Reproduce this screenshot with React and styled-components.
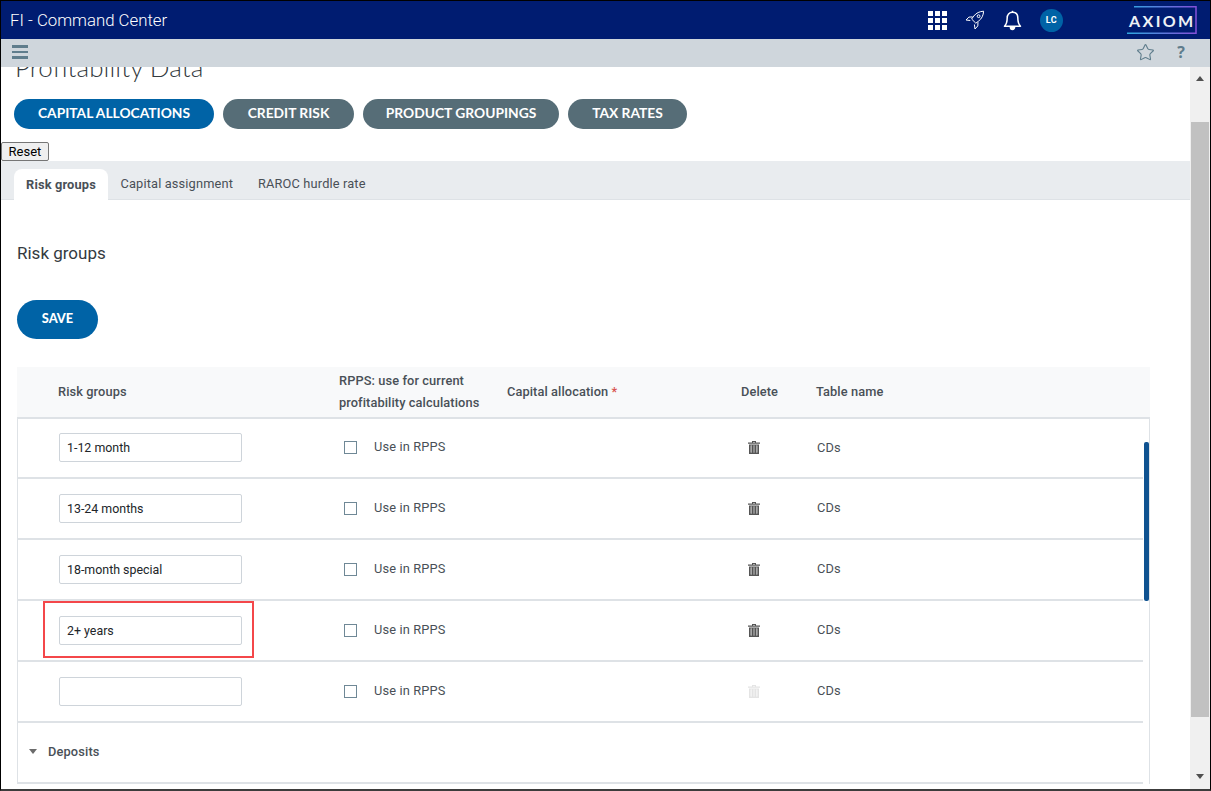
import React from "react"
import styled, { createGlobalStyle } from "styled-components"
import { Star } from "lucide-react"

const rows = [
    { name: "1-12 month" },
    { name: "13-24 months" },
    { name: "18-month special" },
    { name: "2+ years", marked: true },
    { name: "", disabled: true },
]

const tabs = ["Capital assignment", "RAROC hurdle rate"]

const App = () => {
    return (
        <Frame>
            <GlobalStyle />

            <TopBar>
                <AppName>FI - Command Center</AppName>
                <Waffle>
                    {Array.from({ length: 9 }).map((_, i) => <i key={i} />)}
                </Waffle>
                <RocketIcon />
                <BellIcon />
                <Avatar>LC</Avatar>
                <Logo>
                    <LogoBracket />
                    AXIOM
                </Logo>
            </TopBar>

            <ToolBar>
                <Burger><i /><i /><i /></Burger>
                <ToolRight>
                    <Star size={19} strokeWidth={1.4} color="#5f7d8c" />
                    <Question>?</Question>
                </ToolRight>
            </ToolBar>

            <Body>
                <Main>
                    <Title>Profitability Data</Title>

                    <Pills>
                        <Pill $active $width={200}>CAPITAL ALLOCATIONS</Pill>
                        <Pill $width={131}>CREDIT RISK</Pill>
                        <Pill $width={196}>PRODUCT GROUPINGS</Pill>
                        <Pill $width={119}>TAX RATES</Pill>
                    </Pills>

                    <ResetButton>Reset</ResetButton>

                    <TabBar>
                        <ActiveTab>Risk groups</ActiveTab>
                        {tabs.map((t) => <Tab key={t}>{t}</Tab>)}
                    </TabBar>

                    <Heading>Risk groups</Heading>
                    <SaveButton>SAVE</SaveButton>

                    <Table>
                        <HeaderRow>
                            <span>Risk groups</span>
                            <HeaderTwoLine>RPPS: use for current<br />profitability calculations</HeaderTwoLine>
                            <span>Capital allocation <Required>*</Required></span>
                            <span>Delete</span>
                            <span>Table name</span>
                        </HeaderRow>

                        <TableBody>
                            {rows.map((row, i) => (
                                <Row key={i}>
                                    <InputCell>
                                        <NameInput defaultValue={row.name} />
                                        {row.marked ? <RedBox /> : null}
                                    </InputCell>
                                    <CheckCell>
                                        <Check />
                                        <CheckLabel>Use in RPPS</CheckLabel>
                                    </CheckCell>
                                    <span />
                                    <TrashCell><TrashIcon $disabled={row.disabled} /></TrashCell>
                                    <NameCell>CDs</NameCell>
                                </Row>
                            ))}
                            <GroupRow>
                                <Caret />
                                Deposits
                            </GroupRow>
                            <InnerThumb />
                        </TableBody>
                    </Table>
                </Main>

                <ScrollBar>
                    <ArrowUp />
                    <Thumb />
                    <ArrowDown />
                </ScrollBar>
            </Body>
        </Frame>
    )
}

export default App

// Icons
const RocketIcon = () => (
    <RocketSvg viewBox="0 0 20 20" fill="none" stroke="#fff" strokeWidth="1" strokeLinejoin="round">
        <path d="M18.6 1.2c-4 .2-7.4 1.8-9.8 4.8L6.6 9l4.2 4.2 3-2.3c3-2.3 4.6-5.7 4.8-9.7z" />
        <path d="M7.6 6.9 3.9 7.1 1 10l4.3.5" />
        <path d="M13 12.2l-.2 3.7L10 19l-.6-4.5" />
        <circle cx="13.6" cy="6.2" r="1.4" />
    </RocketSvg>
)

const BellIcon = () => (
    <BellSvg viewBox="0 0 20 22" fill="none" stroke="#fff" strokeWidth="1.6" strokeLinejoin="round">
        <path d="M10 2.4c-3.6 0-5.6 2.6-5.6 6 0 4.8-1 6.800-2.800 8.600h16.800c-1.800-1.800-2.800-3.800-2.800-8.600 0-3.400-2-6-5.600-6z" />
        <path d="M10 .8v1.600" />
        <path d="M7.800 18.200a2.200 2.200 0 0 0 4.400 0z" fill="#fff" />
    </BellSvg>
)

const TrashIcon = ({ $disabled }) => (
    <TrashSvg viewBox="0 0 12 13" $disabled={$disabled}>
        <path d="M4 0h4v1.500h4v1.300H0V1.500h4zM5 1v.5h2V1z" fillRule="evenodd" />
        <path d="M1 3.400h10V13H1zM2.600 4.600v6.900h1.300V4.600zM5.400 4.600v6.900h1.200V4.600zM8.100 4.600v6.900h1.300V4.600z" fillRule="evenodd" />
        <path d="M2.600 4.600h6.800v6.900H2.600z" opacity="0.45" />
    </TrashSvg>
)

const LogoBracket = () => (
    <BracketSvg viewBox="0 0 70 28" fill="none">
        <defs>
            <linearGradient id="axiomEdge" x1="0" x2="1" y1="0" y2="0">
                <stop offset="0" stopColor="#2fa8e0" />
                <stop offset="1" stopColor="#8450d8" />
            </linearGradient>
        </defs>
        <path d="M7 .75h62v26.500H0" stroke="url(#axiomEdge)" strokeWidth="1.500" />
    </BracketSvg>
)

// Style
const GlobalStyle = createGlobalStyle`
    html, body {
        margin: 0;
        padding: 0;
        background: #fff;
    }

    * {
        box-sizing: border-box;
    }
`

const Frame = styled.div`
    width: 1211px;
    height: 791px;
    display: flex;
    flex-direction: column;
    overflow: hidden;
    border: 1px solid #000;
    border-bottom: 2px solid #3c3c3c;
    font-family: Roboto, "Liberation Sans", sans-serif;
    color: #343a40;
    background: #fff;
`

const TopBar = styled.div`
    height: 38px;
    flex: none;
    display: flex;
    align-items: center;
    background: #001c71;
    color: #fff;
    padding-left: 9px;
`

const AppName = styled.div`
    font-size: 16.800px;
    font-weight: 300;
    width: 918px;
`

const Waffle = styled.div`
    width: 19px;
    height: 19px;
    display: grid;
    grid-template-columns: repeat(3, 5px);
    grid-template-rows: repeat(3, 5px);
    gap: 2px;

    & > i {
        background: #fff;
    }
`

const RocketSvg = styled.svg`
    width: 20px;
    height: 20px;
    margin-left: 18px;
`

const BellSvg = styled.svg`
    width: 19px;
    height: 21px;
    margin-left: 18px;
`

const Avatar = styled.div`
    width: 23px;
    height: 23px;
    margin-left: 18px;
    border-radius: 50%;
    background: #0063a6;
    display: flex;
    align-items: center;
    justify-content: center;
    font-size: 9px;
    font-weight: 700;
    letter-spacing: 0.5px;
`

const Logo = styled.div`
    position: relative;
    width: 70px;
    height: 28px;
    margin-left: 64px;
    display: flex;
    align-items: center;
    padding-left: 2px;
    font-family: Lato, sans-serif;
    font-size: 16px;
    font-weight: 700;
    letter-spacing: 2.400px;
    color: #eef2f6;
`

const BracketSvg = styled.svg`
    position: absolute;
    inset: 0;
    width: 70px;
    height: 28px;
`

const ToolBar = styled.div`
    height: 28px;
    flex: none;
    display: flex;
    align-items: center;
    justify-content: space-between;
    background: #cfd6dc;
    padding: 0 25px 2px 11px;
    position: relative;
    z-index: 1;
`

const Burger = styled.div`
    width: 16px;
    display: flex;
    flex-direction: column;
    gap: 3px;

    & > i {
        height: 2.500px;
        background: #5f7d8c;
    }
`

const ToolRight = styled.div`
    display: flex;
    align-items: center;
    gap: 22px;
`

const Question = styled.span`
    font-family: "Open Sans", sans-serif;
    font-size: 16px;
    font-weight: 700;
    color: #5f7d8c;
`

const Body = styled.div`
    flex: 1;
    min-height: 0;
    display: flex;
`

const Main = styled.div`
    flex: 1;
    min-width: 0;
    overflow: hidden;
`

const Title = styled.h1`
    margin: -24px 0 8px 14px;
    height: 48px;
    line-height: 48px;
    font-family: Lato, sans-serif;
    font-size: 26px;
    font-weight: 300;
    letter-spacing: 0.08px;
    color: #343a40;
`

const Pills = styled.div`
    display: flex;
    gap: 9px;
    padding-left: 13px;
`

const Pill = styled.div`
    width: ${(props) => props.$width}px;
    height: 30px;
    padding-bottom: 3px;
    border-radius: 15px;
    display: flex;
    align-items: center;
    justify-content: center;
    background: ${(props) => (props.$active ? "#0063a6" : "#566d77")};
    color: #fff;
    font-family: Lato, sans-serif;
    font-size: 13.800px;
    font-weight: 700;
`

const ResetButton = styled.button`
    display: block;
    margin: 13px 0 0;
    width: 48px;
    height: 19px;
    padding: 0;
    border: 1px solid #767676;
    border-radius: 2px;
    background: #efefef;
    color: #000;
    font-family: Roboto, sans-serif;
    font-size: 13px;
`

const TabBar = styled.div`
    height: 39px;
    display: flex;
    align-items: flex-end;
    background: #e9ecef;
    border-bottom: 1px solid #dee2e6;
    padding-left: 13px;
`

const Tab = styled.div`
    height: 31px;
    padding: 0 12.500px;
    display: flex;
    align-items: center;
    font-size: 12.800px;
    letter-spacing: 0.15px;
    color: #495057;
`

const ActiveTab = styled(Tab)`
    width: 94px;
    margin-bottom: -1px;
    justify-content: center;
    padding: 0;
    background: #fff;
    border-radius: 8px 8px 0 0;
    font-weight: 700;
`

const Heading = styled.div`
    margin: 43px 0 0 16px;
    height: 20px;
    line-height: 20px;
    font-size: 17px;
    color: #343a40;
`

const SaveButton = styled.button`
    display: block;
    margin: 37px 0 0 16px;
    width: 81px;
    height: 39px;
    padding: 0 0 3px;
    border: 0;
    border-radius: 20px;
    background: #0063a6;
    color: #fff;
    font-family: Lato, sans-serif;
    font-size: 12.800px;
    font-weight: 900;
`

const Table = styled.div`
    margin: 28px 0 0 16px;
    width: 1133px;
`

const columns = "281px 168px 234px 75px 1fr"

const HeaderRow = styled.div`
    height: 52px;
    display: grid;
    grid-template-columns: ${columns};
    align-items: center;
    padding-left: 41px;
    background: #f8f9fa;
    border-bottom: 2px solid #dee2e6;
    font-size: 12.800px;
    font-weight: 500;
    letter-spacing: 0.1px;
    color: #495057;

    & > span {
        margin-bottom: 2px;
    }
`

const HeaderTwoLine = styled.div`
    line-height: 22px;
    white-space: nowrap;
`

const Required = styled.span`
    color: #d9534f;
`

const TableBody = styled.div`
    position: relative;
    border-left: 1px solid #dee2e6;
    border-right: 1px solid #dee2e6;
    padding-right: 6px;
`

const InnerThumb = styled.div`
    position: absolute;
    right: 0;
    top: 23px;
    width: 5px;
    height: 159px;
    border-radius: 2px;
    background: #0f5290;
`

const Row = styled.div`
    height: 61px;
    display: grid;
    grid-template-columns: ${columns};
    align-items: center;
    padding: 0 0 1px 41px;
    border-bottom: 2px solid #dee2e6;
    font-size: 12.800px;
    color: #495057;

    &:first-of-type {
        height: 60px;
    }
`

const InputCell = styled.div`
    position: relative;
    height: 29px;
`

const NameInput = styled.input`
    display: block;
    width: 183px;
    height: 29px;
    padding: 0 7px;
    border: 1px solid #ced4da;
    border-radius: 2px;
    font-family: Roboto, sans-serif;
    font-size: 12.400px;
    color: #212529;
    outline: none;
`

const RedBox = styled.div`
    position: absolute;
    left: -16px;
    top: -15px;
    width: 211px;
    height: 57px;
    border: 2px solid #f4474a;
    pointer-events: none;
`

const CheckCell = styled.div`
    display: flex;
    align-items: center;
    gap: 17px;
    padding-left: 4px;
    letter-spacing: 0.15px;
`

const CheckLabel = styled.span`
    margin-bottom: 2px;
`

const Check = styled.i`
    display: block;
    width: 13px;
    height: 13px;
    border: 1px solid #6f8896;
`

const TrashCell = styled.div`
    padding-left: 6px;
    display: flex;
`

const TrashSvg = styled.svg`
    width: 12px;
    height: 13px;
    fill: ${(props) => (props.$disabled ? "#e4e4e4" : "#555")};
`

const NameCell = styled.div`
    padding-bottom: 1px;
    letter-spacing: 0.15px;
`

const GroupRow = styled.div`
    height: 61px;
    display: flex;
    align-items: center;
    padding: 0 0 3px 11px;
    border-bottom: 2px solid #dee2e6;
    font-size: 12.800px;
    font-weight: 500;
    letter-spacing: 0.15px;
    color: #495057;
`

const Caret = styled.i`
    display: block;
    width: 0;
    height: 0;
    margin-right: 11px;
    border-left: 4px solid transparent;
    border-right: 4px solid transparent;
    border-top: 5px solid #6b6b6b;
`

const ScrollBar = styled.div`
    width: 20px;
    flex: none;
    display: flex;
    flex-direction: column;
    align-items: center;
    background: #f0f0f0;
    padding: 9px 0 8px;
`

const ArrowUp = styled.i`
    display: block;
    width: 0;
    height: 0;
    border-left: 4.500px solid transparent;
    border-right: 4.500px solid transparent;
    border-bottom: 5px solid #505050;
`

const ArrowDown = styled.i`
    display: block;
    width: 0;
    height: 0;
    margin-top: 57px;
    border-left: 4.500px solid transparent;
    border-right: 4.500px solid transparent;
    border-top: 5px solid #505050;
`

const Thumb = styled.div`
    width: 18px;
    height: 595px;
    margin-top: 41px;
    background: #c1c1c1;
`
